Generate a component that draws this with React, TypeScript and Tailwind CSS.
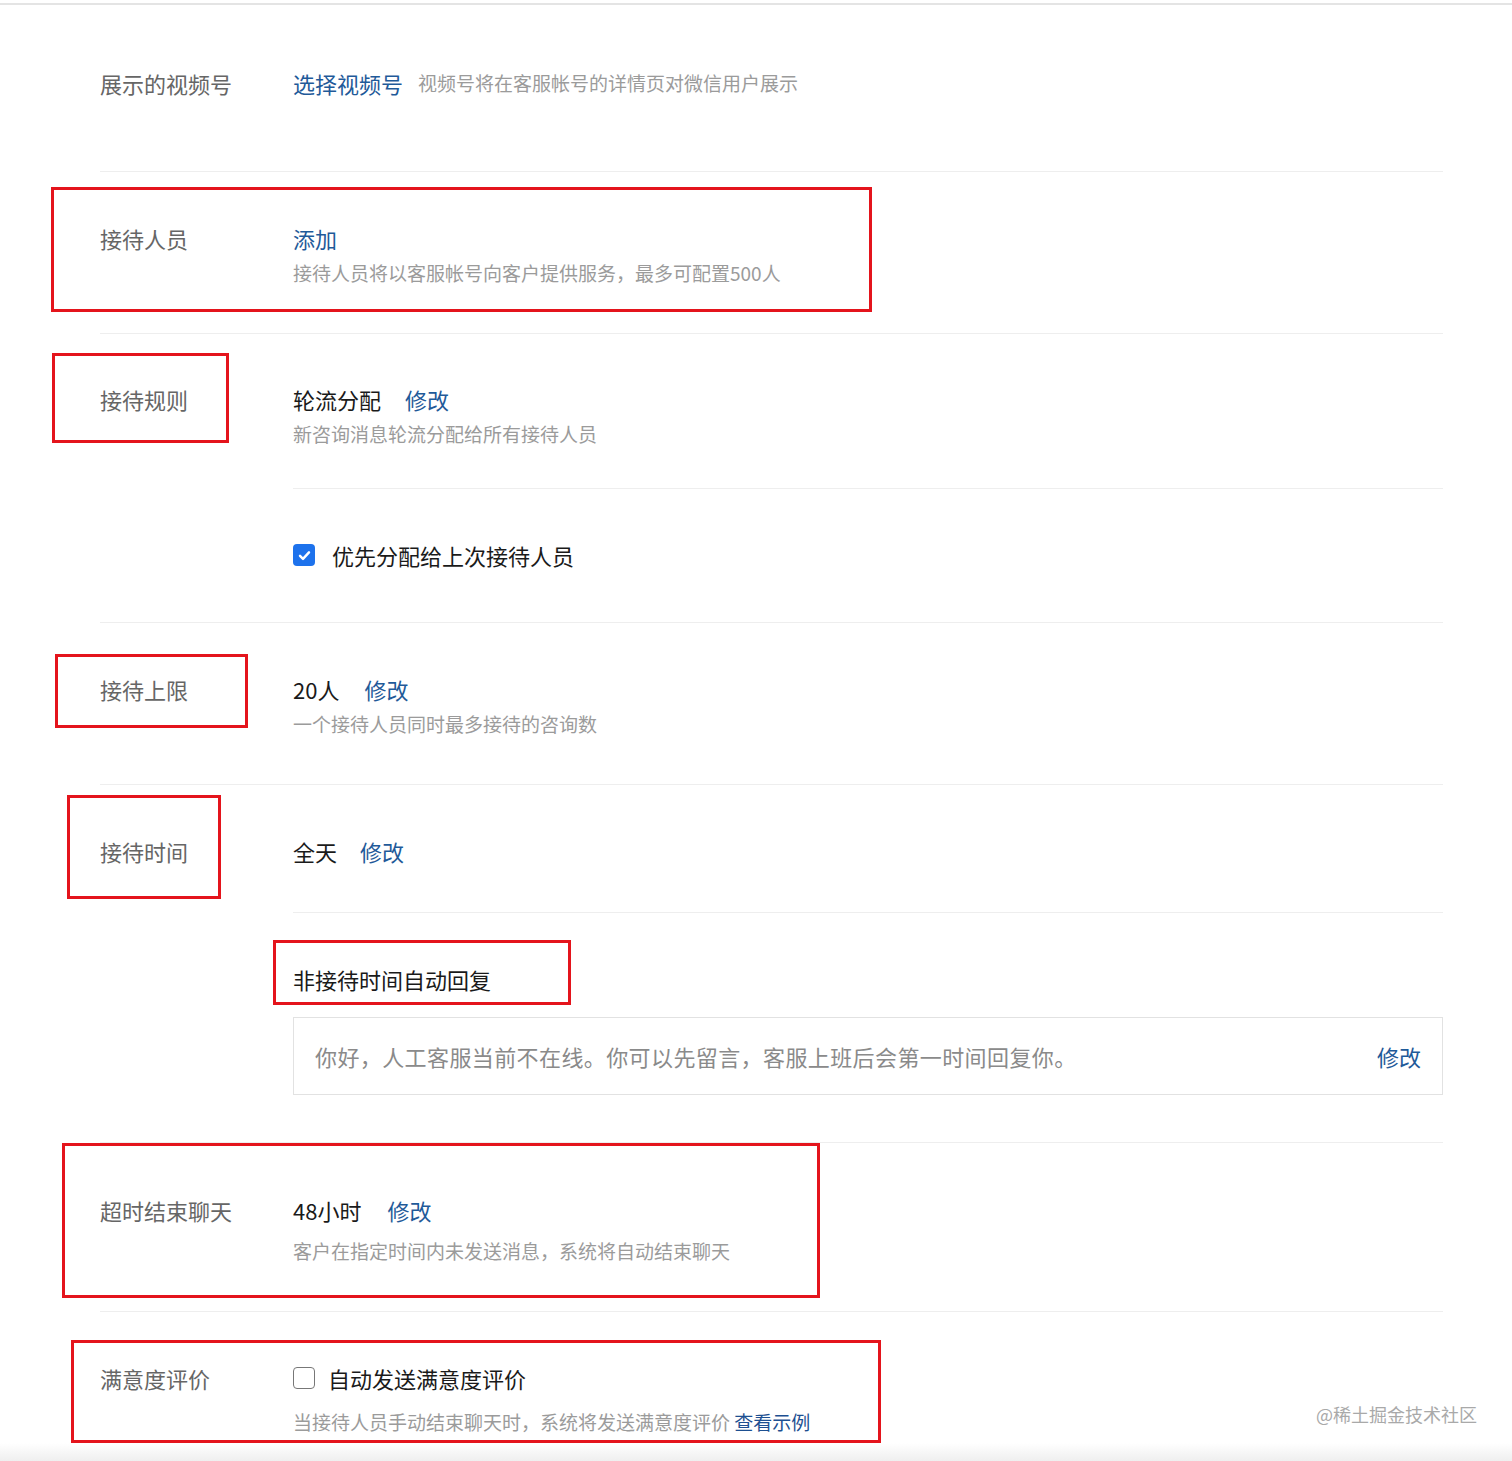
const FONT = { fontFamily: '"Noto Sans CJK SC", "Noto Sans", sans-serif' };

const Divider = () => <div className="h-px bg-[#eeeeee]" />;

const Label = ({ children }: { children: React.ReactNode }) => (
  <div className="w-[193px] shrink-0 text-[22px] leading-[30px] text-[#666666]">{children}</div>
);

const Hint = ({ children, className = "" }: { children: React.ReactNode; className?: string }) => (
  <div className={`text-[19px] leading-[26px] text-[#9b9b9b] ${className}`}>{children}</div>
);

const Edit = () => <span className="text-[22px] leading-[30px] text-[#1f5a99] cursor-pointer">修改</span>;

const CheckedBox = () => (
  <span className="flex h-[22px] w-[22px] items-center justify-center rounded-[4px] bg-[#1d72ec]">
    <svg viewBox="0 0 16 16" className="h-[15px] w-[15px]" fill="none" stroke="white" strokeWidth="2.6" strokeLinecap="round" strokeLinejoin="round">
      <path d="M3.2 8.4 6.4 11.6 12.8 4.6" />
    </svg>
  </span>
);

const EmptyBox = () => (
  <span className="block h-[22px] w-[22px] rounded-[4px] border-[1.5px] border-[#777777] bg-white" />
);

// red annotation boxes drawn over the screenshot
const MARKS = [
  "left-[51px] top-[187px] w-[821px] h-[125px]",
  "left-[52px] top-[353px] w-[177px] h-[90px]",
  "left-[55px] top-[654px] w-[193px] h-[74px]",
  "left-[67px] top-[795px] w-[154px] h-[104px]",
  "left-[273px] top-[940px] w-[298px] h-[65px]",
  "left-[62px] top-[1143px] w-[758px] h-[155px]",
  "left-[71px] top-[1340px] w-[810px] h-[103px]",
];

export default function App() {
  return (
    <div className="relative min-h-[1461px] w-full overflow-hidden bg-white" style={FONT}>
      <div className="mt-[3px] h-[2px] bg-[#e4e4e4]" />

      <div className="pl-[100px] pr-[69px]">
        {/* 展示的视频号 */}
        <div className="flex h-[30px] items-center mt-[63px] mb-[73px]">
          <Label>展示的视频号</Label>
          <span className="text-[22px] leading-[30px] text-[#1f5a99]">选择视频号</span>
          <span className="ml-[15px] text-[19px] leading-[30px] text-[#9b9b9b]">视频号将在客服帐号的详情页对微信用户展示</span>
        </div>
        <Divider />

        {/* 接待人员 */}
        <div className="flex pt-[51px] pb-[47px]">
          <Label>接待人员</Label>
          <div>
            <div className="text-[22px] leading-[30px] text-[#1f5a99]">添加</div>
            <Hint className="mt-[7px]">接待人员将以客服帐号向客户提供服务，最多可配置500人</Hint>
          </div>
        </div>
        <Divider />

        {/* 接待规则 */}
        <div className="flex">
          <div className="pt-[50px]">
            <Label>接待规则</Label>
          </div>
          <div className="flex-1">
            <div className="pt-[50px] pb-[41px]">
              <div className="flex items-center gap-[24px]">
                <span className="text-[22px] leading-[30px] text-[#1a1a1a]">轮流分配</span>
                <Edit />
              </div>
              <Hint className="mt-[7px]">新咨询消息轮流分配给所有接待人员</Hint>
            </div>
            <Divider />
            <div className="flex h-[30px] items-center gap-[17px] mt-[51px] mb-[52px]">
              <CheckedBox />
              <span className="text-[22px] leading-[30px] text-[#1a1a1a]">优先分配给上次接待人员</span>
            </div>
          </div>
        </div>
        <Divider />

        {/* 接待上限 */}
        <div className="flex pt-[51px] pb-[47px]">
          <Label>接待上限</Label>
          <div>
            <div className="flex items-center gap-[25px]">
              <span className="text-[22px] leading-[30px] text-[#1a1a1a]">20人</span>
              <Edit />
            </div>
            <Hint className="mt-[7px]">一个接待人员同时最多接待的咨询数</Hint>
          </div>
        </div>
        <Divider />

        {/* 接待时间 */}
        <div className="flex">
          <div className="pt-[51px]">
            <Label>接待时间</Label>
          </div>
          <div className="flex-1">
            <div className="flex items-center gap-[23px] pt-[51px] pb-[46px]">
              <span className="text-[22px] leading-[30px] text-[#1a1a1a]">全天</span>
              <Edit />
            </div>
            <Divider />
            <div className="pt-[51px] text-[22px] leading-[30px] text-[#1a1a1a]">非接待时间自动回复</div>
            <div className="mt-[23px] mb-[47px] flex h-[78px] items-center justify-between border border-[#e2e2e2] px-[21px]">
              <span className="text-[22px] leading-[30px] tracking-[0.4px] text-[#8a8a8a]">
                你好，人工客服当前不在线。你可以先留言，客服上班后会第一时间回复你。
              </span>
              <Edit />
            </div>
          </div>
        </div>
        <Divider />

        {/* 超时结束聊天 */}
        <div className="flex pt-[52px] pb-[47px]">
          <Label>超时结束聊天</Label>
          <div>
            <div className="flex items-center gap-[26px]">
              <span className="text-[22px] leading-[30px] text-[#1a1a1a]">48小时</span>
              <Edit />
            </div>
            <Hint className="mt-[13px]">客户在指定时间内未发送消息，系统将自动结束聊天</Hint>
          </div>
        </div>
        <Divider />

        {/* 满意度评价 */}
        <div className="flex pt-[51px] pb-[10px]">
          <Label>满意度评价</Label>
          <div>
            <div className="flex h-[30px] items-center gap-[13px]">
              <EmptyBox />
              <span className="text-[22px] leading-[30px] text-[#1a1a1a]">自动发送满意度评价</span>
            </div>
            <Hint className="mt-[16px]">
              当接待人员手动结束聊天时，系统将发送满意度评价 <span className="text-[#1d4f91]">查看示例</span>
            </Hint>
          </div>
        </div>
      </div>

      <div className="absolute bottom-0 left-0 h-[18px] w-full bg-gradient-to-b from-white to-[#efefef]" />

      <div className="absolute left-[1316px] top-[1402px] text-[18px] leading-[24px] text-[#a9a9a9]">@稀土掘金技术社区</div>

      {MARKS.map((m, i) => (
        <div key={i} className={`pointer-events-none absolute border-[3px] border-[#e4141c] ${m}`} />
      ))}
    </div>
  );
}
